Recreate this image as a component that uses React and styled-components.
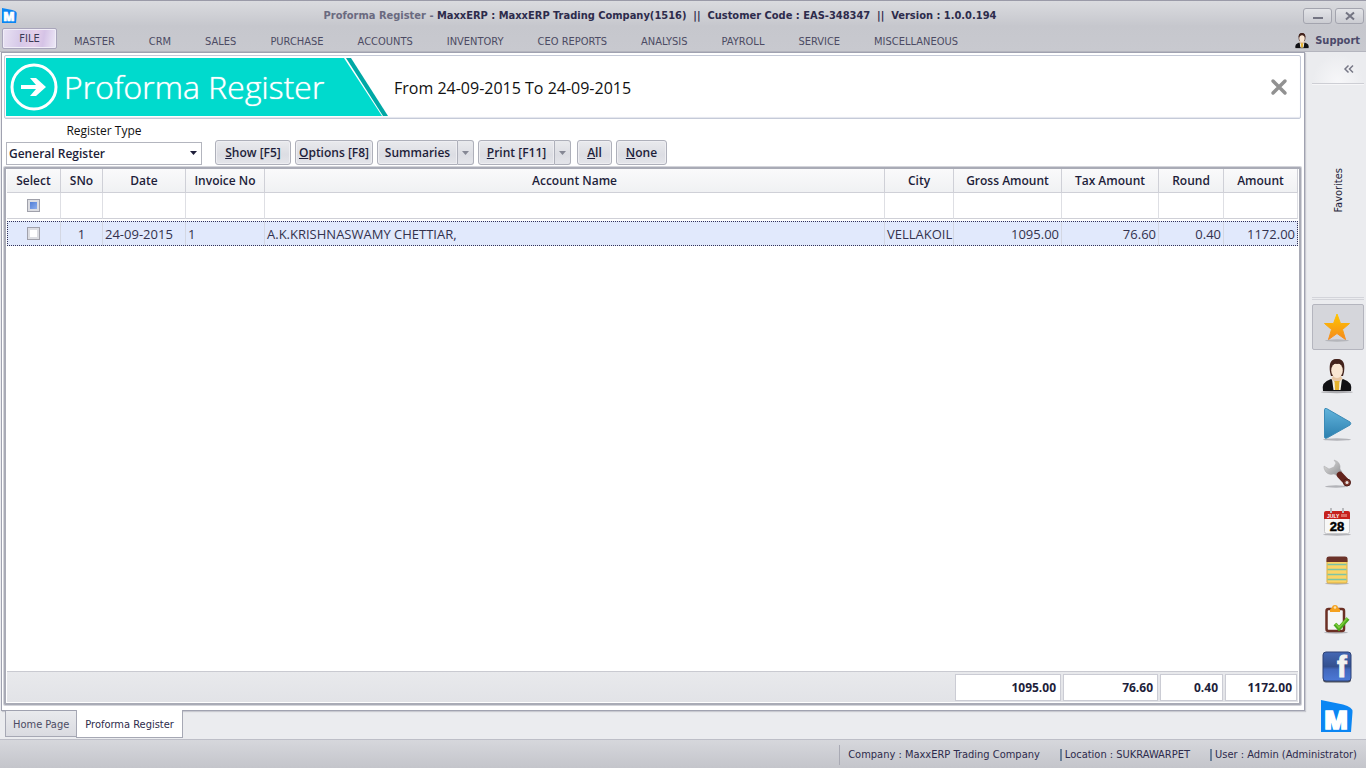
import React, { useState } from "react";
import styled, { createGlobalStyle } from "styled-components";

const GlobalStyle = createGlobalStyle`
  * {
    box-sizing: border-box;
  }

  body {
    margin: 0;
    background-color: #ebecef;
    color: #1e1e3a;
    font-family: "Open Sans", "Noto Sans", sans-serif;
    font-size: 12px;
  }

  button,
  select,
  input {
    margin: 0;
    font: inherit;
    color: inherit;
  }

  svg {
    overflow: visible;
  }
`;

const tahoma = `"DejaVu Sans Condensed", "DejaVu Sans", sans-serif`;

const Window = styled.div`
  display: flex;
  flex-direction: column;
  min-height: 100vh;
`;

// Title bar and menu
const Header = styled.header`
  padding-top: 2px;
  border-top: 1px solid #9a9aa8;
  border-bottom: 1px solid #b4b5be;
  background: linear-gradient(#dadbdf, #c6c7cd 50%, #c8c9cf);
  font-family: ${tahoma};
`;

const TitleBar = styled.div`
  display: flex;
  align-items: center;
  height: 25px;
  padding: 0 2px;
`;

const Title = styled.h1`
  flex: 1;
  margin: 0;
  text-align: center;
  font-size: 11px;
  font-weight: bold;
  white-space: pre;
  color: #2d2b4c;
`;

const Muted = styled.span`
  color: #6a6a80;
`;

const WindowButtons = styled.div`
  display: flex;
  gap: 3px;
`;

const WindowButton = styled.button`
  display: flex;
  align-items: center;
  justify-content: center;
  width: 29px;
  height: 16px;
  padding: 0;
  border: 1px solid #a3a4ae;
  border-radius: 3px;
  background: linear-gradient(#e3e4e8, #cbccd2);
`;

const MenuBar = styled.nav`
  display: flex;
  align-items: center;
  height: 23px;
  padding: 0 6px 0 2px;
  font-size: 11px;
`;

const MenuItem = styled.button`
  padding: 3px 17px 0;
  border: 0;
  background: none;
  color: #4c4b63;
`;

const FileButton = styled.button`
  align-self: flex-start;
  width: 55px;
  height: 21px;
  padding: 0;
  border: 1px solid #a9a5bb;
  border-radius: 2px;
  box-shadow: inset 0 0 0 1px #f1eef8;
  background: linear-gradient(100deg, #e9e3f3, #d6c8e8 35%, #e4cfea 60%, #d5c3e6 75%, #eeeaf7);
  color: #3b3a55;
`;

const SupportLink = styled.a`
  display: flex;
  align-items: center;
  gap: 5px;
  margin-left: auto;
  padding-top: 2px;
  color: #4b4a6a;
  font-weight: bold;
  text-decoration: none;
`;

// Work area
const Body = styled.div`
  display: flex;
  flex: 1;
`;

const Content = styled.main`
  display: flex;
  flex: 1;
  flex-direction: column;
  min-width: 0;
  padding-left: 1px;
`;

const Page = styled.section`
  display: flex;
  flex: 1;
  flex-direction: column;
  padding: 2px 3px 5px 2px;
  border: 1px solid #a0a2b0;
  box-shadow: 1px 1px 1px #c8c9d0;
  background-color: #ffffff;
`;

const Banner = styled.div`
  display: flex;
  align-items: center;
  height: 64px;
  padding: 1px;
  border: 1px solid #c5cad8;
  border-radius: 2px;
  box-shadow: inset 0 -1px 1px #e4e6ee;
`;

const BannerTitle = styled.div`
  display: grid;
  align-items: center;
  width: 382px;
  height: 58px;

  > * {
    grid-area: 1 / 1;
  }
`;

const BannerText = styled.h2`
  display: flex;
  align-items: center;
  gap: 6px;
  margin: 0;
  padding-left: 4px;
  color: #ffffff;
  font-family: "Open Sans", sans-serif;
  font-size: 32px;
  font-weight: 300;
  line-height: 58px;
  text-shadow: 0 0 1px #ffffff;
  white-space: nowrap;
`;

const Period = styled.p`
  flex: 1;
  margin: 0;
  padding: 2px 0 0 6px;
  color: #111111;
  font-size: 16px;
`;

const CloseButton = styled.button`
  display: flex;
  margin-right: 10px;
  padding: 2px;
  border: 0;
  background: none;
`;

const Toolbar = styled.div`
  display: flex;
  align-items: flex-end;
  gap: 4px;
  padding: 4px 0 2px 2px;
`;

const Field = styled.div`
  position: relative;
  width: 196px;
  margin-right: 9px;
`;

const Label = styled.label`
  display: block;
  color: #111111;
  line-height: 16px;
  text-align: center;
`;

const Select = styled.select`
  display: block;
  width: 100%;
  height: 23px;
  margin-top: 3px;
  padding: 0 2px;
  border: 1px solid #b3b5be;
  border-radius: 0;
  appearance: none;
  background-color: #ffffff;
  font-size: 12px;
  font-weight: 600;
`;

const SelectArrow = styled.svg`
  position: absolute;
  right: 5px;
  bottom: 10px;
  pointer-events: none;
`;

const Button = styled.button`
  min-width: ${({ $width }) => $width}px;
  height: 25px;
  padding: 0 2px;
  border: 1px solid #aeb0ba;
  border-radius: ${({ $split }) => ($split ? "3px 0 0 3px" : "3px")};
  box-shadow: inset 0 0 0 1px #eeeef2;
  background: linear-gradient(#e9eaed, #dcdde3 60%, #e4e5ea);
  font-weight: 600;
  white-space: nowrap;
`;

const SplitButton = styled.div`
  display: flex;
`;

const DropButton = styled.button`
  display: flex;
  align-items: center;
  justify-content: center;
  width: 16px;
  height: 25px;
  padding: 0;
  border: 1px solid #aeb0ba;
  border-left: 0;
  border-radius: 0 3px 3px 0;
  background: linear-gradient(#e9eaed, #dcdde3 60%, #e4e5ea);
`;

const ButtonGroup = styled.div`
  display: flex;
  gap: 4px;
  padding-left: 2px;
`;

// Register grid
const GridFrame = styled.div`
  display: flex;
  flex: 1;
  padding: 0 1px 1px;
  border: 2px solid #a9abb6;
  border-radius: 1px;
  box-shadow: 0 0 0 1px #d3d4da;
`;

const Table = styled.table`
  width: 100%;
  height: 100%;
  border-collapse: separate;
  border-spacing: 0;
  table-layout: fixed;
  font-size: 13px;
`;

const HeadCell = styled.th`
  height: 24px;
  padding: 0;
  border-right: 1px solid #cfd0d7;
  border-bottom: 1px solid #cfd0d7;
  background: linear-gradient(#fafafb, #f0f1f3);
  font-size: 12px;
  font-weight: 600;
  white-space: nowrap;
`;

const FilterCell = styled.td`
  height: 26px;
  padding: 0;
  border-right: 1px solid #dedfe4;
  border-bottom: 1px solid #cfd0d7;
  text-align: center;
`;

const SpacerCell = styled.td`
  height: 2px;
  padding: 0;
`;

const DataRow = styled.tr`
  outline: 1px dotted #33335a;
  outline-offset: -1px;
  background-color: #e1e9fc;
`;

const DataCell = styled.td`
  height: 25px;
  padding: 0 2px;
  border-right: 1px solid #d3d7e3;
  color: #33324d;
  text-align: ${({ $align }) => $align || "left"};
  white-space: nowrap;
`;

const FillCell = styled.td`
  padding: 0;
`;

const TotalCell = styled.td`
  height: 31px;
  padding: 1px;
  border-top: 1px solid #c9cad1;
  background: linear-gradient(#e8e9ec, #e2e3e7);
`;

const Total = styled.div`
  height: 27px;
  padding-right: 4px;
  border: 1px solid #cbccd4;
  background-color: #ffffff;
  color: #1e1e3a;
  font-size: 12px;
  font-weight: bold;
  line-height: 25px;
  text-align: right;
`;

const Checkbox = styled.input`
  display: block;
  width: 13px;
  height: 13px;
  margin: 0 auto;
  border: 1px solid #a0a1ab;
  box-shadow: inset 0 0 0 2px #dcdde2;
  appearance: none;
  background: ${({ $filled }) =>
    $filled ? "linear-gradient(135deg, #3f70d0, #9dbbf3)" : "#ffffff"};
`;

// Page tabs
const Tabs = styled.div`
  display: flex;
  align-items: flex-start;
  height: 28px;
  padding-left: 4px;
  font-family: ${tahoma};
`;

const Tab = styled.button`
  position: relative;
  height: ${({ $active }) => ($active ? 28 : 26)}px;
  margin-top: ${({ $active }) => ($active ? -1 : 0)}px;
  padding: 2px ${({ $active }) => ($active ? 8 : 7)}px 0;
  border: 1px solid #a6a8b4;
  border-top: 0;
  border-right-width: ${({ $active }) => ($active ? 1 : 0)}px;
  background: ${({ $active }) => ($active ? "#ffffff" : "linear-gradient(#e9eaed, #dadbe1)")};
  color: ${({ $active }) => ($active ? "#2d2b4c" : "#4c4b63")};
  font-size: 11px;
  white-space: nowrap;
`;

// Sidebar
const Sidebar = styled.aside`
  display: flex;
  flex-direction: column;
  width: 61px;
  padding: 2px 2px 0 7px;
`;

const CollapseBar = styled.div`
  display: flex;
  align-items: center;
  justify-content: flex-end;
  height: 30px;
  padding-right: 10px;
  border-bottom: 1px solid #cdced4;
  box-shadow: 0 1px 0 #f6f6f8;
  background: radial-gradient(ellipse at bottom, #f7f7f9, #ebecef 70%);
`;

const CollapseButton = styled.button`
  display: flex;
  padding: 0;
  border: 0;
  background: none;
`;

const FavoritesTitle = styled.div`
  display: flex;
  align-items: center;
  justify-content: center;
  height: 216px;
  border-bottom: 3px double #d3d4da;
  font-family: ${tahoma};
  font-size: 11px;

  span {
    writing-mode: vertical-rl;
    transform: rotate(180deg);
  }
`;

const Tools = styled.div`
  display: flex;
  flex: 1;
  flex-direction: column;
  justify-content: space-between;
  padding-top: 4px;
`;

const ToolButton = styled.button`
  display: flex;
  align-items: center;
  justify-content: center;
  height: 46px;
  padding: 0 2px 0 0;
  border: 1px solid ${({ $active }) => ($active ? "#b4b5be" : "transparent")};
  border-radius: 2px;
  background-color: ${({ $active }) => ($active ? "#d5d6db" : "transparent")};
`;

const StatusBar = styled.footer`
  display: flex;
  align-items: center;
  justify-content: flex-end;
  height: 29px;
  padding: 2px 9px 0 0;
  border-top: 1px solid #bdbec7;
  background: linear-gradient(#d6d7dc, #c4c5cb);
  color: #2d2b4c;
  font-family: ${tahoma};
  font-size: 11px;
  white-space: nowrap;
`;

const Status = styled.span`
  padding-left: ${({ $first }) => ($first ? 8 : 3)}px;
  margin-left: 20px;
  border-left: ${({ $first }) => ($first ? "1px solid #a9aab4" : "2px solid #6a7f99")};
  line-height: ${({ $first }) => ($first ? 20 : 12)}px;
`;

// Icons
const LogoIcon = ({ size }) => (
  <svg width={size} height={size} viewBox="0 0 32 32" aria-hidden="true">
    <path d="M0 0L22 4.500Q32 7 31.500 12L30 32H0Z" fill="#0b86f3" />
    <text
      x="15"
      y="28.500"
      textAnchor="middle"
      fill="#ffffff"
      stroke="#ffffff"
      strokeWidth="1.500"
      fontFamily="Open Sans, sans-serif"
      fontWeight="800"
      fontSize="25"
    >
      M
    </text>
  </svg>
);

const PersonIcon = ({ size }) => (
  <svg width={size} height={size} viewBox="0 0 32 34" aria-hidden="true">
    <ellipse cx="16" cy="33" rx="16" ry="1.200" fill="#a9a9ad" />
    <path d="M9 13Q7 0 16 0Q25 0 23 13L22 17H10Z" fill="#43231c" />
    <path d="M12 17H20L22 21L16 27L10 21Z" fill="#e8c7a4" />
    <ellipse cx="16" cy="11.500" rx="5.800" ry="7.500" fill="#f9e6d2" />
    <path d="M9 9Q12 4 16 5Q21 4 23 9Q23 0 16 0Q9 0 9 9Z" fill="#43231c" />
    <path d="M2 32Q0 23 10 20L16 25L22 20Q32 23 30 32Z" fill="#111114" />
    <path d="M11 20L16 25L21 20L19.500 31H12.500Z" fill="#f4f1ea" />
    <path d="M13.500 22H18.500L18 31H14Z" fill="#e5b32f" />
  </svg>
);

const StarIcon = () => (
  <svg width="30" height="30" viewBox="0 0 30 30" aria-hidden="true">
    <defs>
      <linearGradient id="star" x1="0" y1="0" x2="0" y2="1">
        <stop offset="0" stopColor="#ffc600" />
        <stop offset="1" stopColor="#f58a1c" />
      </linearGradient>
    </defs>
    <ellipse cx="15" cy="28.500" rx="12" ry="1.200" fill="#b4b5ba" />
    <path
      d="M15 2L18.500 11.500H27.500L20.500 17.500L23.500 27.500L15 21.500L6.500 27.500L9.500 17.500L2.500 11.500H11.500Z"
      fill="url(#star)"
      stroke="url(#star)"
      strokeLinejoin="round"
    />
  </svg>
);

const PlayIcon = () => (
  <svg width="30" height="34" viewBox="0 0 30 34" aria-hidden="true">
    <defs>
      <linearGradient id="play" x1="0" y1="0" x2="0" y2="1">
        <stop offset="0" stopColor="#62b4dc" />
        <stop offset="1" stopColor="#2c7fae" />
      </linearGradient>
    </defs>
    <ellipse cx="15" cy="32.500" rx="14" ry="1.200" fill="#b2b3b8" />
    <path
      d="M2.500 2.500Q2.500 1 4.500 1.500L28 15Q29.500 16.500 28 18L5 31Q2.500 32 2.500 30Z"
      fill="url(#play)"
      stroke="#3b8ab6"
    />
  </svg>
);

const WrenchIcon = () => (
  <svg width="28" height="30" viewBox="0 0 28 30" aria-hidden="true">
    <defs>
      <linearGradient id="steel" x1="0" y1="0" x2="1" y2="1">
        <stop offset="0" stopColor="#e3e3e3" />
        <stop offset="1" stopColor="#8d8e91" />
      </linearGradient>
    </defs>
    <ellipse cx="13" cy="28.500" rx="11" ry="1.200" fill="#b2b3b8" />
    <path
      d="M11 2Q18 4 17 11L19 14L15 18L11 16Q3 18 1 10L1 8L6 11L11 9L13 5Z"
      fill="url(#steel)"
      stroke="#aaaaac"
      strokeWidth="0.500"
    />
    <path d="M17 17L24 24.500" stroke="#64241d" strokeWidth="6.500" strokeLinecap="round" />
    <circle cx="24" cy="24.500" r="3.500" fill="#7c382d" stroke="#4e1a15" />
    <circle cx="24" cy="24.500" r="1.500" fill="#e9e3df" />
  </svg>
);

const CalendarIcon = () => (
  <svg width="28" height="28" viewBox="0 0 28 28" aria-hidden="true">
    <ellipse cx="14" cy="26.500" rx="14" ry="1.200" fill="#b2b3b8" />
    <rect x="1.500" y="4" width="25" height="21.500" rx="2" fill="#f8f8f7" stroke="#c9c9cb" />
    <path d="M1 11V5Q1 3 3 3H25Q27 3 27 5V11Z" fill="#c6211d" />
    <path d="M18 6H24V9H18Z" fill="#dd6c64" />
    <path d="M8 0V5M20 0V5" stroke="#b9babd" strokeWidth="2" />
    <text x="4" y="10" fill="#ffffff" fontFamily="Liberation Sans, sans-serif" fontWeight="bold" fontSize="5">
      JULY
    </text>
    <text
      x="14"
      y="22.500"
      textAnchor="middle"
      fill="#000000"
      stroke="#000000"
      strokeWidth="0.500"
      fontFamily="Liberation Sans, sans-serif"
      fontWeight="bold"
      fontSize="13"
    >
      28
    </text>
  </svg>
);

const NotepadIcon = () => (
  <svg width="24" height="30" viewBox="0 0 24 30" aria-hidden="true">
    <ellipse cx="12" cy="28.500" rx="12" ry="1.200" fill="#b2b3b8" />
    <rect x="2" y="4" width="20" height="24" rx="1" fill="#fbd465" stroke="#dcae41" />
    <path d="M1.500 7V3.500Q1.500 1.500 4 1.500H20Q22.500 1.500 22.500 3.500V7Z" fill="#6b3229" />
    <path
      d="M2.500 9.500H21.500M2.500 14.500H21.500M2.500 19.500H21.500M2.500 24.500H21.500"
      stroke="#7cc3a6"
      strokeWidth="1.500"
    />
  </svg>
);

const TaskIcon = () => (
  <svg width="28" height="30" viewBox="0 0 28 30" aria-hidden="true">
    <ellipse cx="13" cy="28.500" rx="12" ry="1.200" fill="#b2b3b8" />
    <rect x="3.500" y="5" width="17.500" height="22" rx="2" fill="#f5f5f4" stroke="#6b2f24" strokeWidth="2.500" />
    <path d="M7 8V6Q7 4 9 4Q9 1 12 1Q15 1 15 4Q17 4 17 6V8Z" fill="#f5a11e" />
    <circle cx="12" cy="3.500" r="1.300" fill="#fbe3ad" />
    <path d="M12 20L16 24.500L25 14.500" fill="none" stroke="#4aa81c" strokeWidth="4" />
    <path d="M12.500 19.500L16 23.500L24.500 14" fill="none" stroke="#7fcc3b" strokeWidth="1.500" />
  </svg>
);

const FacebookIcon = () => (
  <svg width="30" height="32" viewBox="0 0 30 32" aria-hidden="true">
    <defs>
      <linearGradient id="facebook" x1="0" y1="0" x2="0" y2="1">
        <stop offset="0" stopColor="#4468b5" />
        <stop offset="0.500" stopColor="#34508e" />
        <stop offset="0.600" stopColor="#4268bd" />
        <stop offset="1" stopColor="#4c79d6" />
      </linearGradient>
    </defs>
    <rect x="1" y="2" width="28" height="29.500" rx="3" fill="#53565f" />
    <rect x="1" y="1" width="28" height="29" rx="3" fill="url(#facebook)" stroke="#2f4377" />
    <text
      x="15"
      y="26"
      fill="#f3f3f1"
      stroke="#f3f3f1"
      fontFamily="Liberation Sans, sans-serif"
      fontWeight="bold"
      fontSize="29"
    >
      f
    </text>
  </svg>
);

const DownArrow = ({ color }) => (
  <svg width="7" height="4" viewBox="0 0 7 4" aria-hidden="true">
    <path d="M0 0H7L3.500 4Z" fill={color} />
  </svg>
);

const Hotkey = ({ text }) => (
  <>
    <u>{text[0]}</u>
    {text.slice(1)}
  </>
);

const MENU = [
  "MASTER",
  "CRM",
  "SALES",
  "PURCHASE",
  "ACCOUNTS",
  "INVENTORY",
  "CEO REPORTS",
  "ANALYSIS",
  "PAYROLL",
  "SERVICE",
  "MISCELLANEOUS",
];

const COLUMNS = [
  { name: "Select", width: 54 },
  { name: "SNo", width: 42, align: "center" },
  { name: "Date", width: 83 },
  { name: "Invoice No", width: 79 },
  { name: "Account Name" },
  { name: "City", width: 69 },
  { name: "Gross Amount", width: 108, align: "right" },
  { name: "Tax Amount", width: 97, align: "right" },
  { name: "Round", width: 65, align: "right" },
  { name: "Amount", width: 74, align: "right" },
];

const ROWS = [
  ["1", "24-09-2015", "1", "A.K.KRISHNASWAMY CHETTIAR,", "VELLAKOIL", "1095.00", "76.60", "0.40", "1172.00"],
];

const TOTALS = ["1095.00", "76.60", "0.40", "1172.00"];

const TOOLS = [
  { name: "Favorites", icon: <StarIcon /> },
  { name: "Support", icon: <PersonIcon size={34} /> },
  { name: "Run", icon: <PlayIcon /> },
  { name: "Settings", icon: <WrenchIcon /> },
  { name: "Calendar", icon: <CalendarIcon /> },
  { name: "Notes", icon: <NotepadIcon /> },
  { name: "Tasks", icon: <TaskIcon /> },
  { name: "Facebook", icon: <FacebookIcon /> },
  { name: "MaxxERP", icon: <LogoIcon size={32} /> },
];

const RegisterGrid = () => (
  <GridFrame>
    <Table>
      <colgroup>
        {COLUMNS.map(({ name, width }) => (
          <col key={name} width={width} />
        ))}
      </colgroup>
      <thead>
        <tr>
          {COLUMNS.map(({ name }) => (
            <HeadCell key={name}>{name}</HeadCell>
          ))}
        </tr>
      </thead>
      <tbody>
        <tr>
          {COLUMNS.map(({ name }, i) => (
            <FilterCell key={name}>
              {i === 0 ? <Checkbox type="checkbox" $filled aria-label="Select all" /> : null}
            </FilterCell>
          ))}
        </tr>
        <tr>
          <SpacerCell colSpan={COLUMNS.length} />
        </tr>
        {ROWS.map((row) => (
          <DataRow key={row[0]}>
            <DataCell>
              <Checkbox type="checkbox" aria-label={`Select row ${row[0]}`} />
            </DataCell>
            {row.map((value, i) => (
              <DataCell key={COLUMNS[i + 1].name} $align={COLUMNS[i + 1].align}>
                {value}
              </DataCell>
            ))}
          </DataRow>
        ))}
        <tr>
          <FillCell colSpan={COLUMNS.length} />
        </tr>
      </tbody>
      <tfoot>
        <tr>
          <TotalCell colSpan={6} />
          {TOTALS.map((value) => (
            <TotalCell key={value}>
              <Total>{value}</Total>
            </TotalCell>
          ))}
        </tr>
      </tfoot>
    </Table>
  </GridFrame>
);

const App = () => {
  const [tool, setTool] = useState("Favorites");
  const [tab, setTab] = useState("Proforma Register");

  return (
    <Window>
      <GlobalStyle />
      <Header>
        <TitleBar>
          <LogoIcon size={15} />
          <Title>
            <Muted>Proforma Register - </Muted>
            {"MaxxERP : MaxxERP Trading Company(1516)  ||  Customer Code : EAS-348347  ||  Version : 1.0.0.194"}
          </Title>
          <WindowButtons>
            <WindowButton aria-label="Minimize">
              <svg width="10" height="8" viewBox="0 0 10 8">
                <path d="M0 6H10" stroke="#737482" strokeWidth="2" />
              </svg>
            </WindowButton>
            <WindowButton aria-label="Close window">
              <svg width="10" height="8" viewBox="0 0 10 8">
                <path d="M1 0.500L9 7.500M9 0.500L1 7.500" stroke="#737482" strokeWidth="2" />
              </svg>
            </WindowButton>
          </WindowButtons>
        </TitleBar>
        <MenuBar>
          <FileButton>FILE</FileButton>
          {MENU.map((item) => (
            <MenuItem key={item}>{item}</MenuItem>
          ))}
          <SupportLink href="#support">
            <PersonIcon size={16} />
            Support
          </SupportLink>
        </MenuBar>
      </Header>

      <Body>
        <Content>
          <Page>
            <Banner>
              <BannerTitle>
                <svg width="382" height="58" viewBox="0 0 382 58" aria-hidden="true">
                  <path d="M0 0H338L376 58H0Z" fill="#00dacd" />
                  <path d="M340 0H345L382 58H377Z" fill="#00a8a5" />
                </svg>
                <BannerText>
                  <svg width="48" height="50" viewBox="0 0 48 50" aria-hidden="true">
                    <circle cx="24" cy="25" r="22" fill="none" stroke="#ffffff" strokeWidth="3" />
                    <path
                      d="M11 23H26L20 16H26L36 25L26 34H20L26 27H11Z"
                      fill="#ffffff"
                    />
                  </svg>
                  Proforma Register
                </BannerText>
              </BannerTitle>
              <Period>From 24-09-2015 To 24-09-2015</Period>
              <CloseButton aria-label="Close">
                <svg width="16" height="16" viewBox="0 0 16 16">
                  <path d="M2 2L14 14M14 2L2 14" stroke="#919191" strokeWidth="3.500" strokeLinecap="round" />
                </svg>
              </CloseButton>
            </Banner>

            <Toolbar>
              <Field>
                <Label htmlFor="register-type">Register Type</Label>
                <Select id="register-type" defaultValue="General Register">
                  <option>General Register</option>
                </Select>
                <SelectArrow width="7" height="4" viewBox="0 0 7 4">
                  <path d="M0 0H7L3.500 4Z" fill="#1e1e3a" />
                </SelectArrow>
              </Field>
              <Button $width={76}>
                <Hotkey text="Show [F5]" />
              </Button>
              <Button $width={78}>
                <Hotkey text="Options [F8]" />
              </Button>
              <SplitButton>
                <Button $width={81} $split>
                  Summaries
                </Button>
                <DropButton aria-label="Summaries menu">
                  <DownArrow color="#858794" />
                </DropButton>
              </SplitButton>
              <SplitButton>
                <Button $width={77} $split>
                  <Hotkey text="Print [F11]" />
                </Button>
                <DropButton aria-label="Print menu">
                  <DownArrow color="#858794" />
                </DropButton>
              </SplitButton>
              <ButtonGroup>
                <Button $width={35}>
                  <Hotkey text="All" />
                </Button>
                <Button $width={51}>
                  <Hotkey text="None" />
                </Button>
              </ButtonGroup>
            </Toolbar>

            <RegisterGrid />
          </Page>
          <Tabs>
            {["Home Page", "Proforma Register"].map((name) => (
              <Tab key={name} $active={tab === name} onClick={() => setTab(name)}>
                {name}
              </Tab>
            ))}
          </Tabs>
        </Content>

        <Sidebar>
          <CollapseBar>
            <CollapseButton aria-label="Collapse">
              <svg width="10" height="8" viewBox="0 0 10 8">
                <path
                  d="M4.500 0.500L1 4L4.500 7.500M9 0.500L5.500 4L9 7.500"
                  fill="none"
                  stroke="#777887"
                  strokeWidth="1.500"
                />
              </svg>
            </CollapseButton>
          </CollapseBar>
          <FavoritesTitle>
            <span>Favorites</span>
          </FavoritesTitle>
          <Tools>
            {TOOLS.map(({ name, icon }) => (
              <ToolButton key={name} aria-label={name} $active={tool === name} onClick={() => setTool(name)}>
                {icon}
              </ToolButton>
            ))}
          </Tools>
        </Sidebar>
      </Body>

      <StatusBar>
        <Status $first>Company : MaxxERP Trading Company</Status>
        <Status>Location : SUKRAWARPET</Status>
        <Status>User : Admin (Administrator)</Status>
      </StatusBar>
    </Window>
  );
};

export default App;
